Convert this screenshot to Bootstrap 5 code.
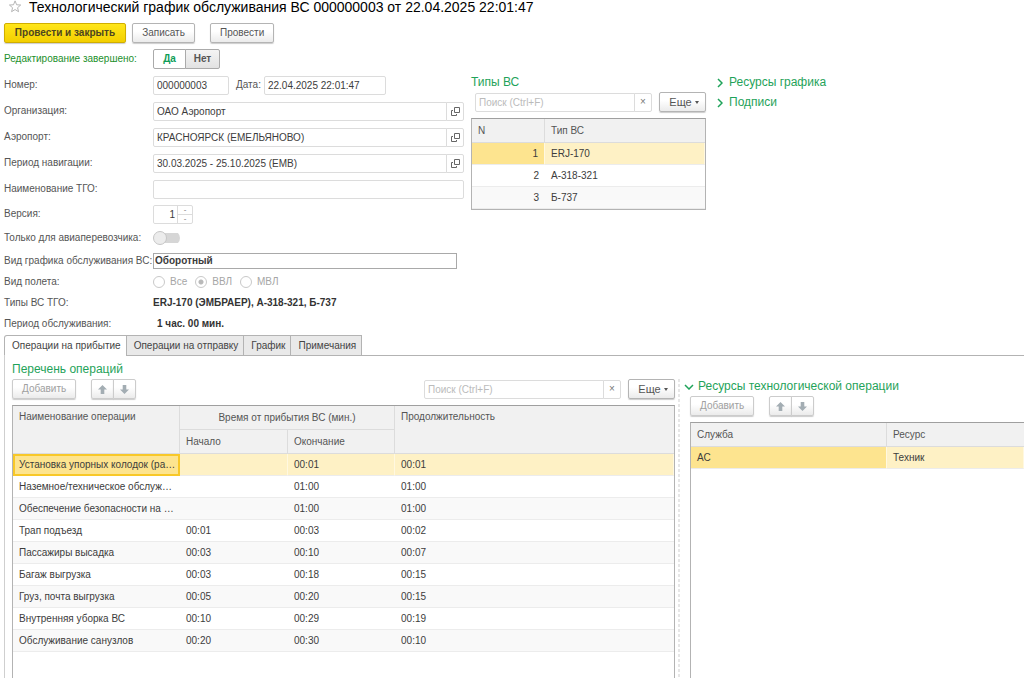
<!DOCTYPE html>
<html lang="ru">
<head>
<meta charset="utf-8">
<meta name="viewport" content="width=device-width, initial-scale=1">
<title>Технологический график обслуживания ВС</title>
<link rel="stylesheet" href="https://cdn.jsdelivr.net/npm/bootstrap@5.3.0/dist/css/bootstrap.min.css">
<style>
  :root { --ink:#555; --green:#1fa35a; --line:#b3b3b3; --soft:#dcdcdc; --pick:#fef1c5; --cell:#fde48f; }
  body { font-family:"Liberation Sans", Arial, sans-serif; font-size:10px; line-height:14px; color:var(--ink); background:#fff; }
  .page { min-height:100vh; padding-left:4px; }
  .doc-title { font-size:14px; line-height:12px; color:#000; margin:0 0 10px; gap:6px; }
  .command-bar { margin-bottom:3px; }
  .btn { --bs-btn-font-size:10px; --bs-btn-line-height:14px; --bs-btn-padding-y:2px; --bs-btn-padding-x:9px; --bs-btn-border-radius:2px; height:20px; white-space:nowrap; }
  .btn-plain { color:#555; border-color:#b4b4b4; background:linear-gradient(#fff 40%,#ebebeb); box-shadow:0 1px 1px #ccc; }
  .btn-main { color:#4d4520; font-weight:bold; border-color:#d0ae00; background:linear-gradient(#ffe61a,#f3cf00); box-shadow:0 1px 1px #ccc; min-width:122px; }
  .btn.btn-plain:disabled { color:#a0a0a0; border-color:#ccc; opacity:1; }
  .btn-save { min-width:63px; margin-left:6px; }
  .btn-post, .btn-add { min-width:64px; }
  .apart { margin-left:15px; }
  .btn-move { width:23px; padding:0; }
  .btn-more { width:47px; padding:0 0 0 3px; font-size:11px; }
  .caret-mark { display:inline-block; border:2px solid transparent; border-top:3px solid #555; border-bottom:0; margin-left:3px; vertical-align:2px; }
  .choice .btn { width:33px; padding-left:0; padding-right:0; font-weight:bold; box-shadow:none; border-color:#aaa; }
  .choice .btn:last-child { width:35px; }
  .choice .btn-check:checked + .btn { background:#fff; color:#0f9d58; border-color:#aaa; }
  .choice .btn-check:not(:checked) + .btn { background:linear-gradient(#f4f4f4,#e2e2e2); color:#555; }
  .top-grid { display:grid; grid-template-columns:460fr 235fr 311fr; column-gap:7px; }
  .field-row { display:flex; align-items:center; height:26px; }
  .field-row.mid { height:24px; }
  .field-row.low { height:21px; }
  .field-row b { color:#333; }
  .field-label { flex:0 0 149px; white-space:nowrap; }
  .done-label { color:#1c8f2c; }
  .form-control { font-size:10px; line-height:14px; min-height:0; height:19px; padding:0 3px; border-color:var(--soft); border-radius:2px; color:#3c3c3c; }
  .form-control::placeholder { color:#bbb; opacity:1; }
  .input-group .btn { height:19px; width:18px; padding:0; border-color:var(--soft); background:#fff; color:#777; z-index:auto; line-height:10px; }
  .num-box { width:76px; } .date-box { width:122px; }
  .date-label { margin:0 3px 0 7px; }
  .kind-box { height:16px; width:304px; border-color:#a9a9a9; border-radius:0; font-weight:bold; padding:0 1px; }
  .ver-box { width:40px; border:1px solid var(--soft); border-radius:2px; height:19px; }
  .ver-box input { border:0; height:17px; width:23px; text-align:right; padding:0 2px; }
  .ver-box .steps { width:16px; border-left:1px solid var(--soft); }
  .ver-box button { border:0; background:none; padding:0; height:8px; line-height:6px; font-size:8px; color:#777; }
  .ver-box button + button { border-top:1px solid var(--soft); height:9px; }
  .slide { appearance:none; width:27px; height:14px; margin:0; position:relative; background:linear-gradient(#d6d6d6,#d6d6d6) 6px 2px/21px 10px no-repeat; border-radius:7px; }
  .slide::before { content:""; position:absolute; left:0; top:0; width:14px; height:14px; border-radius:50%; background:#ececec; border:1px solid #c6c6c6; }
  .dot { appearance:none; width:12px; height:12px; border:1px solid #c9c9c9; border-radius:50%; margin:0 5px 0 0; background:#fff; }
  .dot:checked { background:radial-gradient(circle,#b9b9b9 0 2px,#fff 3px); }
  .faint { color:#a6a6a6; }
  .group-head { font-size:12px; line-height:20px; color:var(--green); margin:0; font-weight:normal; white-space:nowrap; }
  .group-head a { color:inherit; text-decoration:none; }
  .group-head .chev { margin-right:6px; }
  .list-bar { margin-bottom:6px; }
  .find-gap { margin-right:7px; }
  .find-box { width:197px; }
  .grid-box { border:1px solid var(--line); border-top-color:#9f9f9f; }
  .data { width:100%; table-layout:fixed; border-collapse:separate; border-spacing:0; }
  .data th { font-weight:normal; background:#f1f1f1; color:#555; height:24px; padding:0 6px; border-right:1px solid var(--soft); border-bottom:1px solid var(--soft); vertical-align:middle; }
  .data th[rowspan] { vertical-align:top; padding-top:4px; }
  .data th:last-child { border-right:0; }
  .data th.sub { border-right:1px solid var(--soft); }
  .data td { height:22px; padding:0 6px; border-bottom:1px solid #ececec; color:#3c3c3c; white-space:nowrap; }
  .ops td:first-child { padding-right:0; }
  .data tr:nth-child(odd) td { background:#f9f9f9; }
  .data tr:nth-child(even) td { background:#fff; }
  .data tbody tr.picked td { background:var(--pick); border-right:1px solid #fff8e0; }
  .data tbody tr.picked td.now { background:var(--cell); }
  .data tbody tr.picked td.framed { border:2px solid #f8c828; padding:0 0 0 4px; }
  .nav-tabs { border-bottom:0; }
  .tab-strip { display:flex; margin-top:1px; }
  .tab-strip::after { content:""; flex:1; border-bottom:1px solid var(--line); }
  .nav-tabs .nav-link { font-size:10px; line-height:14px; padding:3px 5px 2px 7px; height:21px; color:#444; background:#e9e9e9; border:1px solid var(--line); border-radius:0; margin:0 0 0 -1px; white-space:nowrap; }
  .nav-tabs .nav-item:first-child .nav-link { margin-left:0; border-top-left-radius:3px; }
  .nav-tabs .nav-link.active { background:#fff; color:#444; border-color:var(--line); border-bottom-color:#fff; }
  .pane { display:grid; grid-template-columns:663fr 3px 340fr; column-gap:3px; border-left:1px solid #cfcfcf; padding-left:7px; }
  .ops-col { padding-top:3px; }
  .splitter { margin-top:23px; width:2px; background:repeating-linear-gradient(#e6e6e6 0 3px,transparent 3px 5px); }
  .res-col { padding-top:20px; }
  .res-body { padding-left:6px; }
</style>
</head>
<body>
<svg class="d-none" xmlns="http://www.w3.org/2000/svg">
  <symbol id="up" viewBox="0 0 10 10"><path d="M5 0 10 5H7V10H3V5H0Z"/></symbol>
  <symbol id="down" viewBox="0 0 10 10"><path d="M5 10 10 5H7V0H3V5H0Z"/></symbol>
  <symbol id="open" viewBox="0 0 9 9"><path d="M3.5.5H8.5V5.5H3.5ZM2 3.5H.5V8.5H5.5V7" fill="none" stroke="#666"/></symbol>
</svg>
<div class="page d-flex flex-column">
  <h1 class="doc-title d-flex align-items-center fw-normal text-nowrap">
    <svg class="ms-1 me-n1" width="15" height="13" viewBox="1 0 15 15"><path d="M7 1 8.800 5.500 13.500 5.800 9.900 8.900 11 13.500 7 11 3 13.500 4.100 8.900.5 5.800 5.200 5.500Z" fill="#fff" stroke="#aaa" transform="translate(1 0)"/></svg>
    <span>Технологический график обслуживания ВС 000000003 от 22.04.2025 22:01:47</span>
  </h1>

  <div class="command-bar d-flex">
    <button type="button" class="btn btn-main">Провести и закрыть</button>
    <button type="button" class="btn btn-plain btn-save">Записать</button>
    <button type="button" class="btn btn-plain btn-post apart">Провести</button>
  </div>

  <div class="field-row">
    <span class="field-label done-label" id="doneLabel">Редактирование завершено:</span>
    <div class="btn-group choice" role="group" aria-labelledby="doneLabel">
      <input type="radio" class="btn-check" name="done" id="doneYes" checked><label class="btn" for="doneYes">Да</label>
      <input type="radio" class="btn-check" name="done" id="doneNo"><label class="btn" for="doneNo">Нет</label>
    </div>
  </div>

  <div class="top-grid">
    <form>
      <div class="field-row">
        <label class="field-label" for="num">Номер:</label>
        <input id="num" class="form-control num-box" value="000000003">
        <label class="date-label" for="date">Дата:</label>
        <input id="date" class="form-control date-box" value="22.04.2025 22:01:47">
      </div>
      <div class="field-row">
        <label class="field-label" for="org">Организация:</label>
        <div class="input-group flex-nowrap"><input id="org" class="form-control" value="ОАО Аэропорт"><button type="button" class="btn" aria-label="Открыть"><svg width="9" height="9"><use href="#open"/></svg></button></div>
      </div>
      <div class="field-row">
        <label class="field-label" for="port">Аэропорт:</label>
        <div class="input-group flex-nowrap"><input id="port" class="form-control" value="КРАСНОЯРСК (ЕМЕЛЬЯНОВО)"><button type="button" class="btn" aria-label="Открыть"><svg width="9" height="9"><use href="#open"/></svg></button></div>
      </div>
      <div class="field-row">
        <label class="field-label" for="season">Период навигации:</label>
        <div class="input-group flex-nowrap"><input id="season" class="form-control" value="30.03.2025 - 25.10.2025 (ЕМВ)"><button type="button" class="btn" aria-label="Открыть"><svg width="9" height="9"><use href="#open"/></svg></button></div>
      </div>
      <div class="field-row">
        <label class="field-label" for="tgo">Наименование ТГО:</label>
        <input id="tgo" class="form-control">
      </div>
      <div class="field-row mid">
        <label class="field-label" for="ver">Версия:</label>
        <div class="ver-box d-flex"><input id="ver" class="form-control" value="1"><div class="steps d-flex flex-column"><button type="button" aria-label="Больше">-</button><button type="button" aria-label="Меньше">-</button></div></div>
      </div>
      <div class="field-row mid">
        <label class="field-label" for="only">Только для авиаперевозчика:</label>
        <input type="checkbox" role="switch" class="slide" id="only">
      </div>
      <div class="field-row low">
        <label class="field-label" for="kind">Вид графика обслуживания ВС:</label>
        <input id="kind" class="form-control kind-box" value="Оборотный">
      </div>
      <div class="field-row low">
        <span class="field-label">Вид полета:</span>
        <div class="d-flex gap-2 faint">
          <label class="d-flex align-items-center"><input type="radio" name="fl" class="dot" disabled>Все</label>
          <label class="d-flex align-items-center"><input type="radio" name="fl" class="dot" disabled checked>ВВЛ</label>
          <label class="d-flex align-items-center"><input type="radio" name="fl" class="dot" disabled>МВЛ</label>
        </div>
      </div>
      <div class="field-row low"><span class="field-label">Типы ВС ТГО:</span><b>ERJ-170 (ЭМБРАЕР), А-318-321, Б-737</b></div>
      <div class="field-row low"><span class="field-label">Период обслуживания:</span><b class="ps-1">1 час. 00 мин.</b></div>
    </form>

    <section>
      <h2 class="group-head">Типы ВС</h2>
      <div class="list-bar d-flex align-items-center ps-1">
        <div class="input-group flex-nowrap find-gap"><input class="form-control" placeholder="Поиск (Ctrl+F)" aria-label="Поиск типа ВС"><button type="button" class="btn" aria-label="Очистить">×</button></div>
        <button type="button" class="btn btn-plain btn-more flex-shrink-0">Еще<span class="caret-mark"></span></button>
      </div>
      <div class="grid-box">
        <table class="data">
          <colgroup><col style="width:73px"><col></colgroup>
          <thead><tr><th>N</th><th>Тип ВС</th></tr></thead>
          <tbody>
            <tr class="picked"><td class="text-end now">1</td><td>ERJ-170</td></tr>
            <tr><td class="text-end">2</td><td>А-318-321</td></tr>
            <tr><td class="text-end">3</td><td>Б-737</td></tr>
          </tbody>
        </table>
      </div>
    </section>

    <section class="ps-1">
      <h2 class="group-head"><a href="#"><svg class="chev" width="6" height="10" viewBox="0 0 6 10"><path d="M1 1 5 5 1 9" fill="none" stroke="currentColor" stroke-width="1.500"/></svg>Ресурсы графика</a></h2>
      <h2 class="group-head"><a href="#"><svg class="chev" width="6" height="10" viewBox="0 0 6 10"><path d="M1 1 5 5 1 9" fill="none" stroke="currentColor" stroke-width="1.500"/></svg>Подписи</a></h2>
    </section>
  </div>

  <div class="tab-strip">
    <ul class="nav nav-tabs flex-nowrap">
      <li class="nav-item"><button type="button" class="nav-link active">Операции на прибытие</button></li>
      <li class="nav-item"><button type="button" class="nav-link">Операции на отправку</button></li>
      <li class="nav-item"><button type="button" class="nav-link">График</button></li>
      <li class="nav-item"><button type="button" class="nav-link">Примечания</button></li>
    </ul>
  </div>

  <div class="pane flex-grow-1">
    <section class="ops-col d-flex flex-column">
      <h2 class="group-head">Перечень операций</h2>
      <div class="list-bar d-flex align-items-center">
        <button type="button" class="btn btn-plain btn-add" disabled>Добавить</button>
        <div class="btn-group apart"><button type="button" class="btn btn-plain btn-move" disabled aria-label="Вверх"><svg width="9" height="9" fill="#a3adb3"><use href="#up"/></svg></button><button type="button" class="btn btn-plain btn-move" disabled aria-label="Вниз"><svg width="9" height="9" fill="#a3adb3"><use href="#down"/></svg></button></div>
        <div class="input-group flex-nowrap ms-auto find-gap find-box"><input class="form-control" placeholder="Поиск (Ctrl+F)" aria-label="Поиск операции"><button type="button" class="btn" aria-label="Очистить">×</button></div>
        <button type="button" class="btn btn-plain btn-more">Еще<span class="caret-mark"></span></button>
      </div>
      <div class="grid-box border-bottom-0 flex-grow-1">
        <table class="data ops">
          <colgroup><col style="width:167px"><col style="width:108px"><col style="width:107px"><col></colgroup>
          <thead>
            <tr><th rowspan="2">Наименование операции</th><th colspan="2" class="text-center">Время от прибытия ВС (мин.)</th><th rowspan="2">Продолжительность</th></tr>
            <tr><th>Начало</th><th class="sub">Окончание</th></tr>
          </thead>
          <tbody>
            <tr class="picked"><td class="now framed">Установка упорных колодок (ра…</td><td></td><td>00:01</td><td>00:01</td></tr>
            <tr><td>Наземное/техническое обслуж…</td><td></td><td>01:00</td><td>01:00</td></tr>
            <tr><td>Обеспечение безопасности на …</td><td></td><td>01:00</td><td>01:00</td></tr>
            <tr><td>Трап подъезд</td><td>00:01</td><td>00:03</td><td>00:02</td></tr>
            <tr><td>Пассажиры высадка</td><td>00:03</td><td>00:10</td><td>00:07</td></tr>
            <tr><td>Багаж выгрузка</td><td>00:03</td><td>00:18</td><td>00:15</td></tr>
            <tr><td>Груз, почта выгрузка</td><td>00:05</td><td>00:20</td><td>00:15</td></tr>
            <tr><td>Внутренняя уборка ВС</td><td>00:10</td><td>00:29</td><td>00:19</td></tr>
            <tr><td>Обслуживание санузлов</td><td>00:20</td><td>00:30</td><td>00:10</td></tr>
          </tbody>
        </table>
      </div>
    </section>
    <div class="splitter"></div>
    <section class="res-col d-flex flex-column">
      <h2 class="group-head"><a href="#"><svg class="me-1" width="10" height="6" viewBox="0 0 10 6"><path d="M1 1 5 5 9 1" fill="none" stroke="currentColor" stroke-width="1.500"/></svg>Ресурсы технологической операции</a></h2>
      <div class="res-body d-flex flex-column flex-grow-1">
        <div class="list-bar d-flex">
          <button type="button" class="btn btn-plain btn-add" disabled>Добавить</button>
          <div class="btn-group apart"><button type="button" class="btn btn-plain btn-move" disabled aria-label="Вверх"><svg width="9" height="9" fill="#a3adb3"><use href="#up"/></svg></button><button type="button" class="btn btn-plain btn-move" disabled aria-label="Вниз"><svg width="9" height="9" fill="#a3adb3"><use href="#down"/></svg></button></div>
        </div>
        <div class="grid-box border-bottom-0 border-end-0 flex-grow-1">
          <table class="data">
            <colgroup><col style="width:196px"><col></colgroup>
            <thead><tr><th>Служба</th><th>Ресурс</th></tr></thead>
            <tbody><tr class="picked"><td class="now">АС</td><td>Техник</td></tr></tbody>
          </table>
        </div>
      </div>
    </section>
  </div>
</div>
<script src="https://cdn.jsdelivr.net/npm/bootstrap@5.3.0/dist/js/bootstrap.bundle.min.js"></script>
</body>
</html>
